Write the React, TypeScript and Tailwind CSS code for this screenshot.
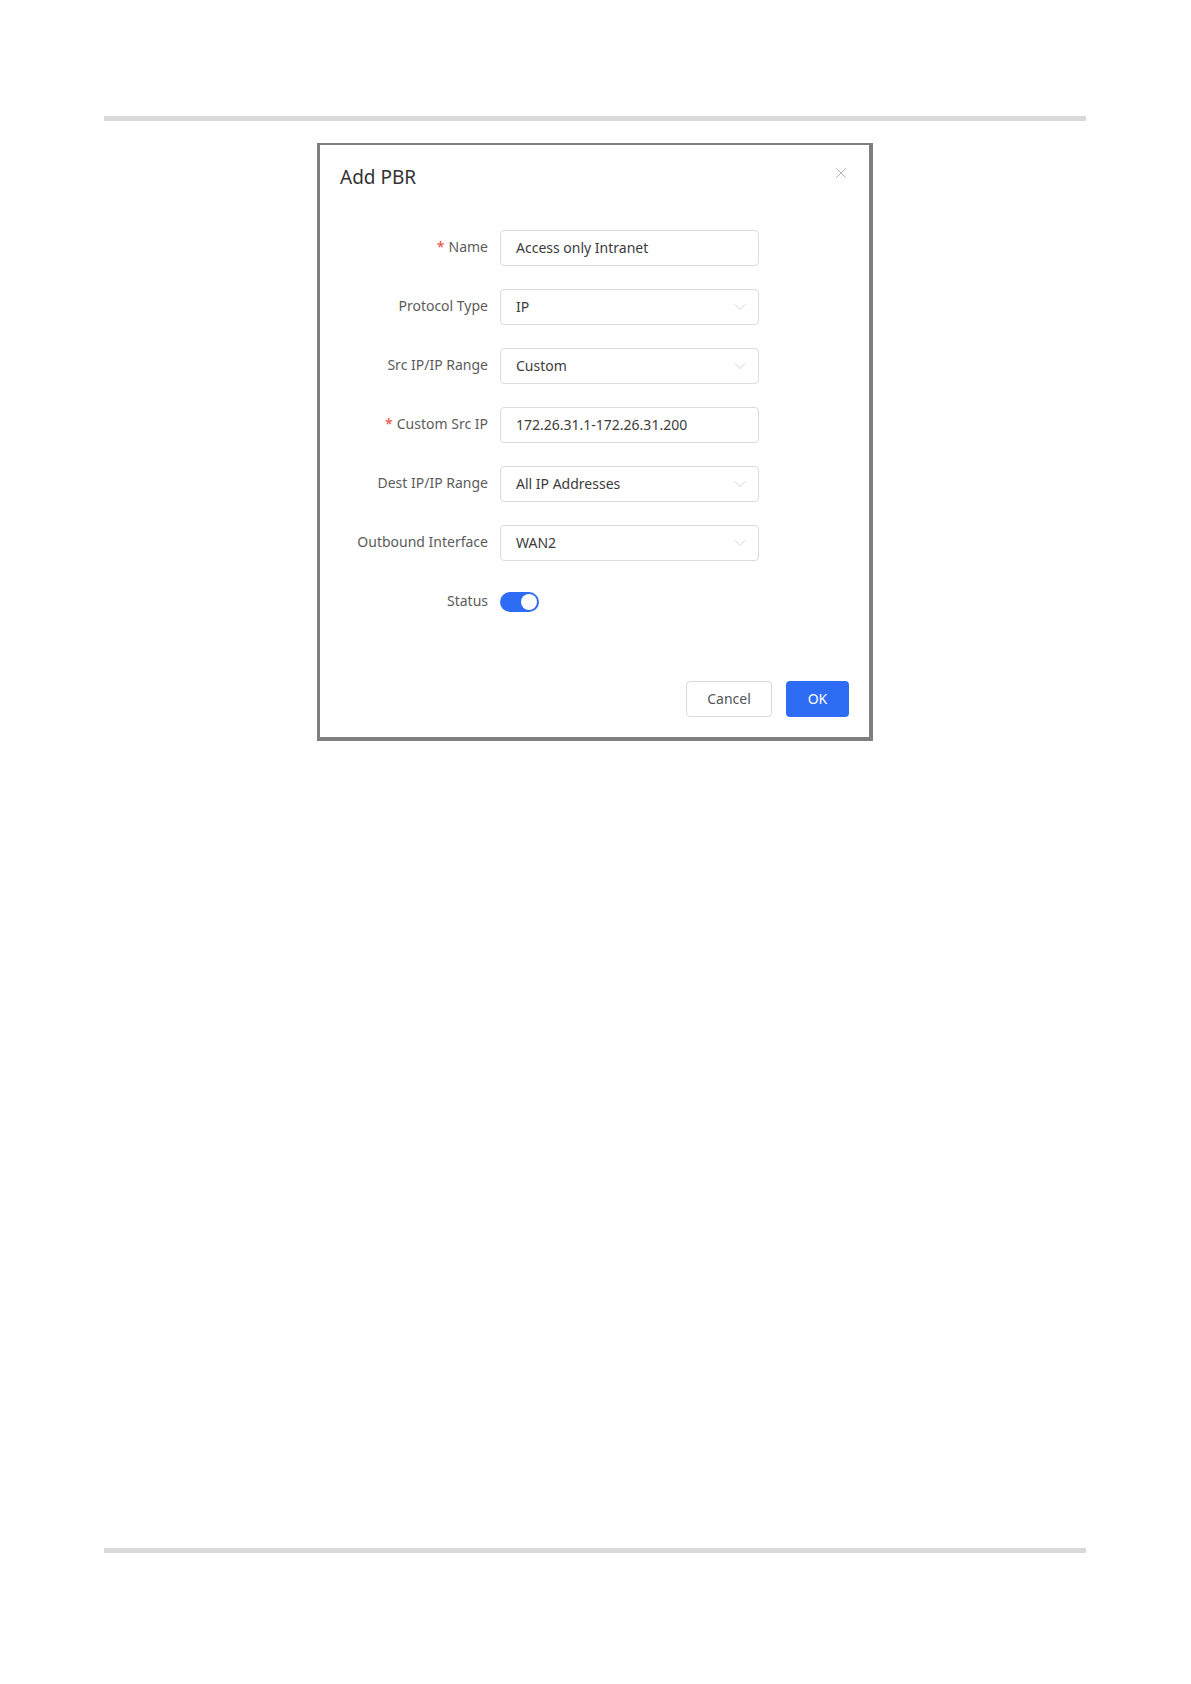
import { X, ChevronDown } from "lucide-react";

type Field = {
  label: string;
  required?: boolean;
  value: string;
  select?: boolean;
};

const fields: Field[] = [
  { label: "Name", required: true, value: "Access only Intranet" },
  { label: "Protocol Type", value: "IP", select: true },
  { label: "Src IP/IP Range", value: "Custom", select: true },
  { label: "Custom Src IP", required: true, value: "172.26.31.1-172.26.31.200" },
  { label: "Dest IP/IP Range", value: "All IP Addresses", select: true },
  { label: "Outbound Interface", value: "WAN2", select: true },
];

function Row({ field }: { field: Field }) {
  return (
    <div className="grid grid-cols-[168px_259px] items-center gap-x-3">
      <label className="pb-[3px] text-right text-[14px] text-[#5c5c5c]">
        {field.required && <span className="mr-1 text-[#e5483e]">*</span>}
        {field.label}
      </label>
      <div className="flex h-9 items-center justify-between rounded border border-[#dcdcdc] bg-white pl-[15px] pr-[8px] text-[14px] text-[#3c3c3c]">
        <span className="pb-[2px]">{field.value}</span>
        {field.select && <ChevronDown className="h-5 w-5 text-[#c4c4c4]" strokeWidth={0.9} aria-hidden="true" />}
      </div>
    </div>
  );
}

export default function App() {
  return (
    <div className="min-h-[1684px] w-[1191px] bg-white pt-[116px] font-['Noto_Sans','Open_Sans',sans-serif]">
      <div className="ml-[104px] h-[5px] w-[982px] bg-[#d9d9d9]" />

      <div className="ml-[317px] mt-[22px] w-[556px] border-b-4 border-l-[3px] border-r-4 border-t-2 border-[#7f7f7f] bg-white">
        <div className="relative px-[20px] pt-[19px]">
          <h2 className="h-[26px] text-[19px] leading-[26px] text-[#333]">Add PBR</h2>
          <X className="absolute right-[19px] top-[19px] h-[18px] w-[18px] text-[#9a9a9a]" strokeWidth={1} aria-hidden="true" />
        </div>

        <div className="mt-10 flex flex-col gap-[23px]">
          {fields.map((field) => (
            <Row key={field.label} field={field} />
          ))}
          <div className="grid h-9 grid-cols-[168px_259px] items-center gap-x-3">
            <label className="pb-[3px] text-right text-[14px] text-[#5c5c5c]">Status</label>
            <div className="flex h-5 w-[39px] items-center justify-end rounded-full bg-[#2f6cf5] pr-[2px]">
              <span className="h-4 w-4 rounded-full bg-white" />
            </div>
          </div>
        </div>

        <div className="mt-[61px] flex justify-end gap-[14px] pb-5 pr-5">
          <button type="button" className="h-9 w-[86px] rounded border border-[#d9d9d9] bg-white pb-[2px] text-[14px] text-[#555]">Cancel</button>
          <button type="button" className="h-9 w-[63px] rounded bg-[#2f6cf5] pb-[2px] text-[14px] text-white">OK</button>
        </div>
      </div>

      <div className="ml-[104px] mt-[807px] h-[5px] w-[982px] bg-[#d9d9d9]" />
    </div>
  );
}
